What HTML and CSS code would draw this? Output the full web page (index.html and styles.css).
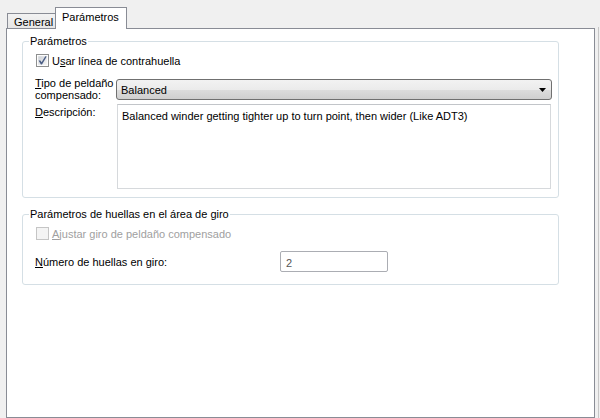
FILE: index.html
```html
<!DOCTYPE html>
<html lang="es">
<head>
<meta charset="utf-8">
<title>Parámetros</title>
<link rel="stylesheet" href="styles.css">
</head>
<body>
<div class="window">
  <div class="main">
    <div class="tabstrip">
      <div class="tab">General</div>
      <div class="tab tab-active">Parámetros</div>
    </div>
    <div class="panel">
      <fieldset class="group group-main">
        <legend class="legend">Parámetros</legend>
        <label class="check-row">
          <span class="checkbox">
            <svg width="13" height="13" viewBox="0 0 13 13">
              <defs>
                <linearGradient id="cbg" x1="0" y1="0" x2="1" y2="1">
                  <stop offset="0" stop-color="#cbcfd5"/>
                  <stop offset="1" stop-color="#f6f6f6"/>
                </linearGradient>
              </defs>
              <rect x="0.5" y="0.5" width="12" height="12" fill="#fff" stroke="#8e8f8f"/>
              <rect x="2" y="2" width="9" height="9" fill="url(#cbg)" stroke="#f4f4f4" stroke-width="0.6"/>
              <path d="M2.6 6.6 L4.4 6.4 L5.6 8.3 L9.3 2.3 L10.7 2.6 L6 10.4 L4.9 10.4 Z" fill="#4a5d85"/>
            </svg>
          </span>
          <span>U<u>s</u>ar línea de contrahuella</span>
        </label>
        <div class="form-grid">
          <div class="label label-type">
            <span class="line"><u>T</u>ipo de peldaño</span>
            <span class="line">compensado:</span>
          </div>
          <div class="combo">
            <span>Balanced</span>
            <svg class="arrow" width="7" height="4" viewBox="0 0 7 4"><path d="M0 0 H7 L3.5 4 Z" fill="#000"/></svg>
          </div>
          <div class="label label-desc"><u>D</u>escripción:</div>
          <div class="textarea">Balanced winder getting tighter up to turn point, then wider (Like ADT3)</div>
        </div>
      </fieldset>
      <fieldset class="group group-turn">
        <legend class="legend">Parámetros de huellas en el área de giro</legend>
        <label class="check-row disabled">
          <span class="checkbox">
            <svg width="13" height="13" viewBox="0 0 13 13">
              <rect x="0.5" y="0.5" width="12" height="12" fill="#f4f4f4" stroke="#c5c5c5"/>
              <rect x="2" y="2" width="9" height="9" fill="#f4f4f4"/>
            </svg>
          </span>
          <span><u>A</u>justar giro de peldaño compensado</span>
        </label>
        <div class="number-row">
          <div class="label"><u>N</u>úmero de huellas en giro:</div>
          <div class="input">2</div>
        </div>
      </fieldset>
    </div>
  </div>
  <div class="edge"></div>
</div>
</body>
</html>
```

FILE: styles.css
```css
* { box-sizing: border-box; }

html, body {
  margin: 0;
  padding: 0;
  background: #f0f0f0;
}

body {
  font-family: "Liberation Sans", Arial, sans-serif;
  font-size: 11px;
  line-height: 12px;
  color: #000;
  width: 600px;
  height: 418px;
  overflow: hidden;
}

u { text-decoration: underline; text-underline-offset: 1px; }

.window {
  display: flex;
  height: 418px;
}

.main {
  width: 595px;
  padding-left: 6px;
}

.edge {
  margin-top: 27px;
  margin-left: 3px;
  width: 1px;
  background: #c6c6c6;
}

.tabstrip {
  display: flex;
  align-items: flex-end;
  height: 28px;
  padding-left: 1px;
}

.tab {
  height: 15px;
  width: 49px;
  border: 1px solid #898c95;
  border-bottom: none;
  background: linear-gradient(#f2f2f2, #e6e6e6);
  padding: 2px 0 0 6px;
  line-height: 12px;
  position: relative;
}

.tab-active {
  height: 22px;
  width: 72px;
  margin-left: -1px;
  margin-bottom: -1px;
  background: #fff;
  z-index: 1;
  padding: 3px 0 0 6px;
}

.panel {
  height: 390px;
  width: 589px;
  border: 1px solid #898c95;
  background: #fff;
  padding: 6px 0 0 15px;
}

.group {
  width: 537px;
  margin: 0;
  border: 1px solid #d5dfe5;
  border-radius: 3px;
  padding: 7px 7px 0 12px;
}

.legend {
  padding: 0 1px;
  margin-left: -6px;
  line-height: 12px;
}

.group-main {
  padding-bottom: 8px;
}

.group-turn {
  margin-top: 10px;
  padding-top: 7px;
  padding-bottom: 12px;
}

.check-row {
  display: flex;
  align-items: flex-start;
  height: 13px;
  margin-left: 1px;
}

.checkbox {
  width: 13px;
  height: 13px;
  margin-right: 3px;
  display: block;
}
.checkbox svg { display: block; }

.check-row > span:last-child {
  padding-top: 1px;
}

.disabled { color: #a0a0a0; }

.form-grid {
  display: grid;
  grid-template-columns: 81px 1fr;
  row-gap: 4px;
  margin-top: 12px;
}

.label-type {
  margin: -2px 0 -3px;
}
.line { display: block; height: 12px; }
.label-desc { margin-top: 2px; }

.combo {
  height: 21px;
  margin-right: -1px;
  border: 1px solid #707070;
  border-radius: 3px;
  background: linear-gradient(#f2f2f2 0%, #ebebeb 50%, #dddddd 51%, #cfcfcf 100%);
  display: flex;
  align-items: center;
  justify-content: space-between;
  padding: 1px 5px 0 4px;
}

.arrow { display: block; margin-top: 0px; }

.textarea {
  margin-left: 1px;
  height: 85px;
  border: 1px solid #d6d9dc;
  border-top-color: #c2c5c9;
  padding: 5px 4px;
  background: #fff;
}

.number-row {
  display: flex;
  align-items: center;
  margin-top: 11px;
}

.number-row .label {
  width: 245px;
  padding-top: 1px;
}

.input {
  width: 108px;
  height: 21px;
  border: 1px solid #abadb3;
  border-radius: 2px;
  padding: 5px 5px 0 5px;
  color: #555;
  background: #fff;
}
```
